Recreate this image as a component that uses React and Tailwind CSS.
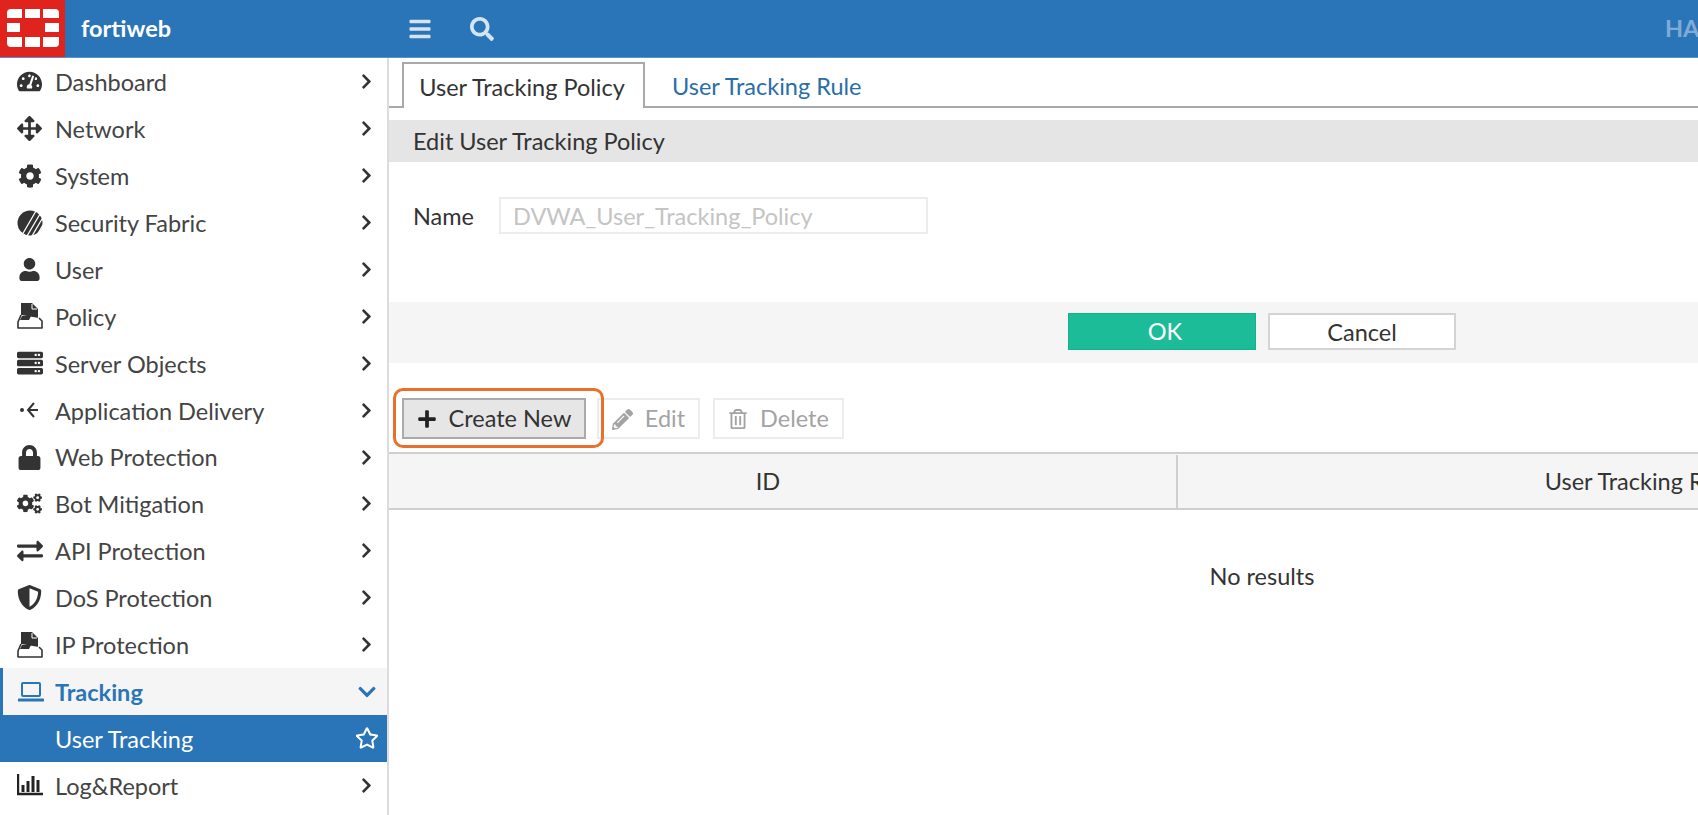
import React from 'react';
import {
  FaBars, FaSearch, FaChevronRight, FaChevronDown, FaTachometerAlt, FaArrowsAlt, FaCog, FaUser,
  FaServer, FaLock, FaCogs, FaExchangeAlt, FaShieldAlt, FaRegStar, FaPlus, FaPencilAlt, FaRegTrashAlt,
} from 'react-icons/fa';

function FortiLogo() {
  return (
    <svg width="52" height="39" viewBox="0 0 52 39" fill="#fff">
      <path d="M4 0h11v9H0V4a4 4 0 0 1 4-4z" />
      <rect x="18" y="0" width="15" height="9" />
      <path d="M36 0h12a4 4 0 0 1 4 4v5H36z" />
      <rect x="0" y="14" width="13" height="9" />
      <rect x="38" y="14" width="14" height="9" />
      <path d="M0 28h15v10H4a4 4 0 0 1-4-4z" />
      <rect x="18" y="28" width="15" height="10" />
      <path d="M36 28h16v6a4 4 0 0 1-4 4H36z" />
    </svg>
  );
}

function FabricIcon() {
  return (
    <svg width="26" height="26" viewBox="0 0 26 26">
      <circle cx="13" cy="13" r="12.5" fill="#333" />
      <path d="M19 1 5 25M23 4 10 26M25 9 15 26M26 15 20 25" stroke="#fff" strokeWidth="1.3" />
    </svg>
  );
}

function PolicyIcon() {
  return (
    <svg width="26" height="26" viewBox="0 0 26 26">
      <path d="M4 0h11l6 6v10H4z" fill="#333" />
      <path d="M15 1v5h5" fill="none" stroke="#fff" strokeWidth="1" />
      <path d="M4 12 1 19v6h24v-7l-3-3" fill="#fff" stroke="#333" strokeWidth="1.6" strokeLinejoin="round" />
      <path d="M3 17h9l2-4H5z" fill="#333" />
    </svg>
  );
}

function DeliveryIcon() {
  return (
    <svg width="19" height="16" viewBox="0 0 19 16" fill="none" stroke="#333" strokeWidth="2">
      <circle cx="2" cy="8" r="2" fill="#333" stroke="none" />
      <path d="M18 8H8M14 1 8 8l6 7" />
    </svg>
  );
}

function LaptopIcon() {
  return (
    <svg width="26" height="20" viewBox="0 0 26 20" fill="none" stroke="#2a75b8" strokeWidth="2">
      <rect x="4" y="1" width="18" height="13" rx="1" />
      <path d="M1 18h24" strokeWidth="3" strokeLinecap="round" />
    </svg>
  );
}

function ChartIcon() {
  return (
    <svg width="26" height="22" viewBox="0 0 26 22" fill="none" stroke="#222">
      <path d="M1 0v20h25" strokeWidth="2.4" />
      <path d="M6 11v7M11 7v11M16 2v16M21 6v12" strokeWidth="3" />
    </svg>
  );
}

const navItems = [
  { label: 'Dashboard', icon: <FaTachometerAlt size={25} /> },
  { label: 'Network', icon: <FaArrowsAlt size={25} /> },
  { label: 'System', icon: <FaCog size={24} /> },
  { label: 'Security Fabric', icon: <FabricIcon /> },
  { label: 'User', icon: <FaUser size={23} /> },
  { label: 'Policy', icon: <PolicyIcon /> },
  { label: 'Server Objects', icon: <FaServer size={26} /> },
  { label: 'Application Delivery', icon: <DeliveryIcon /> },
  { label: 'Web Protection', icon: <FaLock size={25} /> },
  { label: 'Bot Mitigation', icon: <FaCogs size={25} /> },
  { label: 'API Protection', icon: <FaExchangeAlt size={26} /> },
  { label: 'DoS Protection', icon: <FaShieldAlt size={25} /> },
  { label: 'IP Protection', icon: <PolicyIcon /> },
];

function NavRow({ icon, label }) {
  return (
    <div className="flex h-[46.9px] items-center text-[#444]">
      <span className="flex w-[55px] shrink-0 items-center justify-center pl-[4px] text-[#333]">{icon}</span>
      <span className="flex-1 pt-[2px]">{label}</span>
      <FaChevronRight size={17} className="mr-[12px] text-[#333]" />
    </div>
  );
}

export default function App() {
  return (
    <div className="flex h-[815px] w-[1698px] flex-col overflow-hidden bg-white font-['Lato',sans-serif] text-[23.5px] text-[#333]">
      {/* top bar */}
      <header className="flex h-[58px] shrink-0 items-center border-b border-[#5b93cc] bg-[#2a75b8]">
        <div className="flex h-full w-[65px] shrink-0 items-center justify-center bg-[#e0231c]">
          <FortiLogo />
        </div>
        <span className="ml-[16px] w-[327px] font-bold text-white">fortiweb</span>
        <FaBars size={24} className="text-[#d5e4f2]" />
        <FaSearch size={24} className="ml-[38px] text-[#d5e4f2]" />
        <span className="ml-auto w-[33px] shrink-0 overflow-hidden whitespace-nowrap font-bold text-[#7fabd6]">HA</span>
      </header>

      <div className="flex min-h-0 flex-1">
        {/* sidebar */}
        <aside className="w-[389px] shrink-0 border-r-2 border-[#dcdcdc] pt-[0.5px]">
          {navItems.map((item) => (
            <NavRow key={item.label} icon={item.icon} label={item.label} />
          ))}
          <div className="flex h-[46.9px] items-center border-l-[3px] border-[#2a75b8] bg-[#f5f5f5] font-bold text-[#2a75b8]">
            <span className="flex w-[52px] shrink-0 items-center justify-center pl-[4px]"><LaptopIcon /></span>
            <span className="flex-1 pt-[2px]">Tracking</span>
            <FaChevronDown size={20} className="mr-[10px]" />
          </div>
          <div className="flex h-[46.9px] items-center bg-[#2a75b8] pl-[55px] text-white">
            <span className="flex-1 pt-[2px]">User Tracking</span>
            <FaRegStar size={24} className="mr-[8px]" />
          </div>
          <NavRow icon={<ChartIcon />} label="Log&Report" />
        </aside>

        {/* main */}
        <main className="min-w-0 flex-1 overflow-hidden">
          <div className="flex h-[50px] items-end border-b-2 border-[#a9a9a9] pl-[13px]">
            <div className="-mb-[2px] flex h-[46px] w-[243px] items-center justify-center border-x-2 border-t-2 border-[#a9a9a9] bg-white pr-[3px] pt-[3px]">User Tracking Policy</div>
            <div className="flex h-[44px] items-center pl-[27px] pt-[6px] text-[#2a6ea8]">User Tracking Rule</div>
          </div>

          <div className="mt-[12px] flex h-[42px] items-center bg-[#e5e5e5] pl-[24px] pt-[2px]">Edit User Tracking Policy</div>

          <div className="mt-[35px] flex h-[37px] items-center pl-[24px]">
            <span className="w-[86px] pt-[2px]">Name</span>
            <div className="flex h-full w-[429px] items-center border-2 border-[#ececec] pl-[12px] pt-[2px] text-[#c4c4c4]">DVWA_User_Tracking_Policy</div>
          </div>

          <div className="mt-[68px] flex h-[61px] items-start bg-[#f5f5f5] pl-[679px] pt-[11px]">
            <button className="h-[37px] w-[188px] border border-[#15b08f] bg-[#1cbc98] pl-[6px] text-white">OK</button>
            <button className="ml-[12px] h-[37px] w-[188px] border-2 border-[#d4d4d4] bg-white">Cancel</button>
          </div>

          <div className="relative mt-[35px] flex h-[41px] items-center pl-[13px]">
            <div className="pointer-events-none absolute left-[4px] top-[-10px] h-[60px] w-[211px] rounded-[10px] border-[3px] border-[#e8702a]" />
            <button className="flex h-[41px] w-[184px] items-center justify-center gap-[12px] border-2 border-[#aaa] bg-[#e6e6e6] pt-[1px]">
              <FaPlus size={20} className="text-[#222]" /><span>Create New</span>
            </button>
            <button className="ml-[11px] flex h-[41px] w-[103px] items-center justify-center gap-[12px] border-2 border-[#ececec] pt-[1px] text-[#a3a3a3]">
              <FaPencilAlt size={21} /><span>Edit</span>
            </button>
            <button className="ml-[13px] flex h-[41px] w-[131px] items-center justify-center gap-[12px] border-2 border-[#ececec] pt-[1px] text-[#a3a3a3]">
              <FaRegTrashAlt size={20} /><span>Delete</span>
            </button>
          </div>

          <div className="mt-[13px] flex h-[58px] w-[1712px] items-center border-y-2 border-[#cfcfcf] bg-[#f5f5f5] pt-[1px]">
            <div className="w-[787px] pr-[29px] text-center">ID</div>
            <div className="flex h-full flex-1 items-center justify-center border-l-2 border-[#cfcfcf]">User Tracking Rule</div>
          </div>
          <div className="mt-[49px] w-[1746px] text-center">No results</div>
        </main>
      </div>
    </div>
  );
}
